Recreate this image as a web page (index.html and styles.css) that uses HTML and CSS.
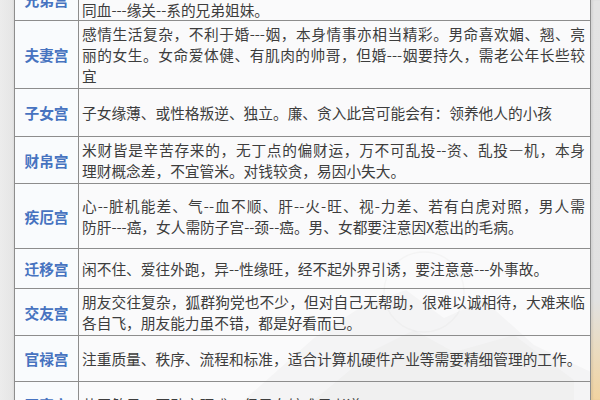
FILE: index.html
```html
<!DOCTYPE html>
<html lang="zh-CN">
<head>
<meta charset="utf-8">
<title>十二宫</title>
<link rel="stylesheet" href="styles.css">
</head>
<body>
<div class="page">
  <div class="sheet">
    <svg class="watermark" width="577" height="400" viewBox="0 0 577 400" aria-hidden="true">
      <polygon points="230,400 300,338 350,305 392,290 430,318 470,300 520,345 577,372 577,400" fill="#7a7a7a" opacity="0.07"/>
      <polygon points="300,400 360,350 400,330 440,352 500,335 560,380 560,400" fill="#7a7a7a" opacity="0.05"/>
      <circle cx="410" cy="292" r="40" fill="none" stroke="#9a9a9a" stroke-width="1.5" opacity="0.1"/>
    </svg>
    <table class="palaces">
      <colgroup><col class="c-name"><col class="c-text"></colgroup>
      <tr class="r-xiongdi">
        <td class="name">兄弟宫</td>
        <td class="text"><span class="ln">兄弟姐妹不多，彼此感情一般，难以互相扶持，多为</span><span class="ln">同血---缘关--系的兄弟姐妹。</span></td>
      </tr>
      <tr class="r-fuqi">
        <td class="name">夫妻宫</td>
        <td class="text"><span class="ln">感情生活复杂，不利于婚---姻，本身情事亦相当精彩。男命喜欢媚、翘、亮</span><span class="ln">丽的女生。女命爱体健、有肌肉的帅哥，但婚---姻要持久，需老公年长些较</span><span class="ln">宜</span></td>
      </tr>
      <tr class="r-zinv">
        <td class="name">子女宫</td>
        <td class="text"><span class="ln">子女缘薄、或性格叛逆、独立。廉、贪入此宫可能会有：领养他人的小孩</span></td>
      </tr>
      <tr class="r-caibo">
        <td class="name">财帛宫</td>
        <td class="text"><span class="ln">米财皆是辛苦存来的，无丁点的偏财运，万不可乱投--资、乱投—机，本身</span><span class="ln">理财概念差，不宜管米。对钱较贪，易因小失大。</span></td>
      </tr>
      <tr class="r-jie">
        <td class="name">疾厄宫</td>
        <td class="text"><span class="ln">心--脏机能差、气--血不顺、肝--火-旺、视-力差、若有白虎对照，男人需</span><span class="ln">防肝---癌，女人需防子宫--颈--癌。男、女都要注意因X惹出的毛病。</span></td>
      </tr>
      <tr class="r-qianyi">
        <td class="name">迁移宫</td>
        <td class="text"><span class="ln">闲不住、爱往外跑，异--性缘旺，经不起外界引诱，要注意意---外事故。</span></td>
      </tr>
      <tr class="r-jiaoyou">
        <td class="name">交友宫</td>
        <td class="text"><span class="ln">朋友交往复杂，狐群狗党也不少，但对自己无帮助，很难以诚相待，大难来临</span><span class="ln">各自飞，朋友能力虽不错，都是好看而已。</span></td>
      </tr>
      <tr class="r-guanlu">
        <td class="name">官禄宫</td>
        <td class="text"><span class="ln">注重质量、秩序、流程和标准，适合计算机硬件产业等需要精细管理的工作。</span></td>
      </tr>
      <tr class="r-tianzhai">
        <td class="name">田宅宫</td>
        <td class="text"><span class="ln">若无煞星，不动产旺盛，但子女较难尽孝道</span></td>
      </tr>
    </table>
  </div>
  <div class="edge"></div>
</div>
</body>
</html>
```
FILE: styles.css
```css
html, body {
  margin: 0;
  padding: 0;
}
body {
  width: 600px;
  height: 400px;
  overflow: hidden;
  font-family: "Noto Sans CJK SC", "Noto Sans", sans-serif;
}
.page {
  display: flex;
  height: 400px;
  overflow: hidden;
  background: linear-gradient(to right, #ececec 0, #e6e6e6 12px, #dcdcdc 14px);
}
.sheet {
  position: relative;
  width: 577px;
  margin-left: 14px;
  flex: none;
  background: #f8f8f9;
}
.watermark {
  position: absolute;
  left: 0;
  top: 0;
  pointer-events: none;
}
.edge {
  flex: 1;
  background: linear-gradient(to bottom, #e3e3e3 0, #e1e1e1 300px, #eadbc0 350px, #f1d3a0 400px);
  box-shadow: inset 2px 0 2px rgba(0, 0, 0, 0.06);
}
.palaces {
  position: relative;
  border-collapse: collapse;
  table-layout: fixed;
  width: 577px;
  margin-top: -23px;
}
.c-name { width: 64px; }
.palaces td {
  border: 1px solid #8d8d8d;
  padding: 0;
  vertical-align: middle;
}
.name {
  text-align: center;
  color: #4773c0;
  font-weight: 700;
  font-size: 14.7px;
  line-height: 21px;
  background: rgba(250, 252, 255, 0.7);
}
.palaces td.text {
  padding: 0 5px 0 3px;
  color: #3d3d3d;
  font-size: 14.7px;
  line-height: 21px;
  background: rgba(255, 255, 255, 0.35);
}
.ln {
  display: block;
  white-space: nowrap;
  text-align: justify;
  text-align-last: justify;
}
.ln:last-child {
  text-align-last: auto;
}
.r-xiongdi { height: 40px; }
.r-fuqi { height: 68px; }
.r-zinv { height: 48px; }
.r-caibo { height: 47px; }
.r-jie { height: 65px; }
.r-qianyi { height: 40px; }
.r-jiaoyou { height: 47px; }
.r-guanlu { height: 46px; }
.r-tianzhai { height: 46px; }
```
